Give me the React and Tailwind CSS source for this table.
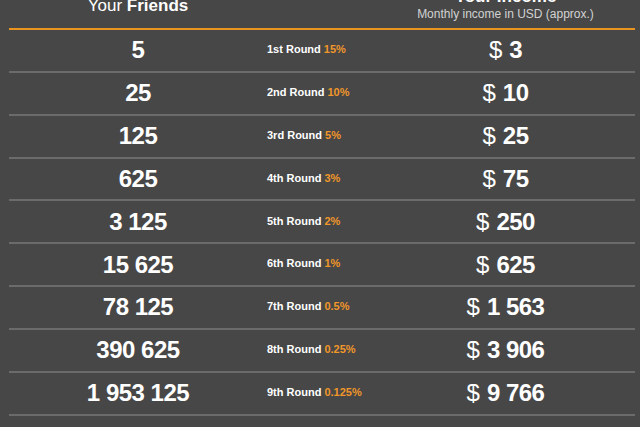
import React from "react";

const rows = [
  { friends: "5", round: "1st", pct: "15%", income: "3" },
  { friends: "25", round: "2nd", pct: "10%", income: "10" },
  { friends: "125", round: "3rd", pct: "5%", income: "25" },
  { friends: "625", round: "4th", pct: "3%", income: "75" },
  { friends: "3 125", round: "5th", pct: "2%", income: "250" },
  { friends: "15 625", round: "6th", pct: "1%", income: "625" },
  { friends: "78 125", round: "7th", pct: "0.5%", income: "1 563" },
  { friends: "390 625", round: "8th", pct: "0.25%", income: "3 906" },
  { friends: "1 953 125", round: "9th", pct: "0.125%", income: "9 766" },
  { friends: "9 765 625", round: "10th", pct: "0.0625%", income: "24 414" },
];

function App() {
  return (
    <div
      className="w-[640px] h-[427px] overflow-hidden bg-[#474747] text-white"
      style={{ fontFamily: '"Liberation Sans", Arial, sans-serif' }}
    >
      <div className="ml-[9px] w-[626px]">
        {/* header, scrolled partly out of view */}
        <div className="-mt-[20px] h-[50px] grid grid-cols-[258px_109px_1fr] border-b-2 border-[#e8941f]">
          <div className="flex flex-col justify-end items-center pb-[12px]">
            <div className="text-[17px] leading-[20px]">
              Your <span className="font-bold">Friends</span>
            </div>
          </div>
          <div></div>
          <div className="flex flex-col justify-end items-center pb-[7px]">
            <div className="text-[17px] leading-[20px] font-bold">Your Income</div>
            <div className="text-[12px] leading-[14px] text-[#d2d2d2]">
              Monthly income in USD (approx.)
            </div>
          </div>
        </div>

        {rows.map((r) => (
          <div
            key={r.round}
            className="h-[42.85px] grid grid-cols-[258px_109px_1fr] border-b-2 border-[#6b6b6b]"
          >
            <div className="flex items-center justify-center text-[24px] font-bold tracking-[-0.5px]">
              {r.friends}
            </div>
            <div className="flex items-center text-[11px] font-bold pb-[2px]">
              <span>{r.round} Round</span>
              <span className="ml-[3px] text-[#f0962a]">{r.pct}</span>
            </div>
            <div className="flex items-center justify-center text-[24px]">
              <span>$</span>
              <span className="ml-[7px] font-bold tracking-[-0.5px]">{r.income}</span>
            </div>
          </div>
        ))}
      </div>
    </div>
  );
}

export default App;
